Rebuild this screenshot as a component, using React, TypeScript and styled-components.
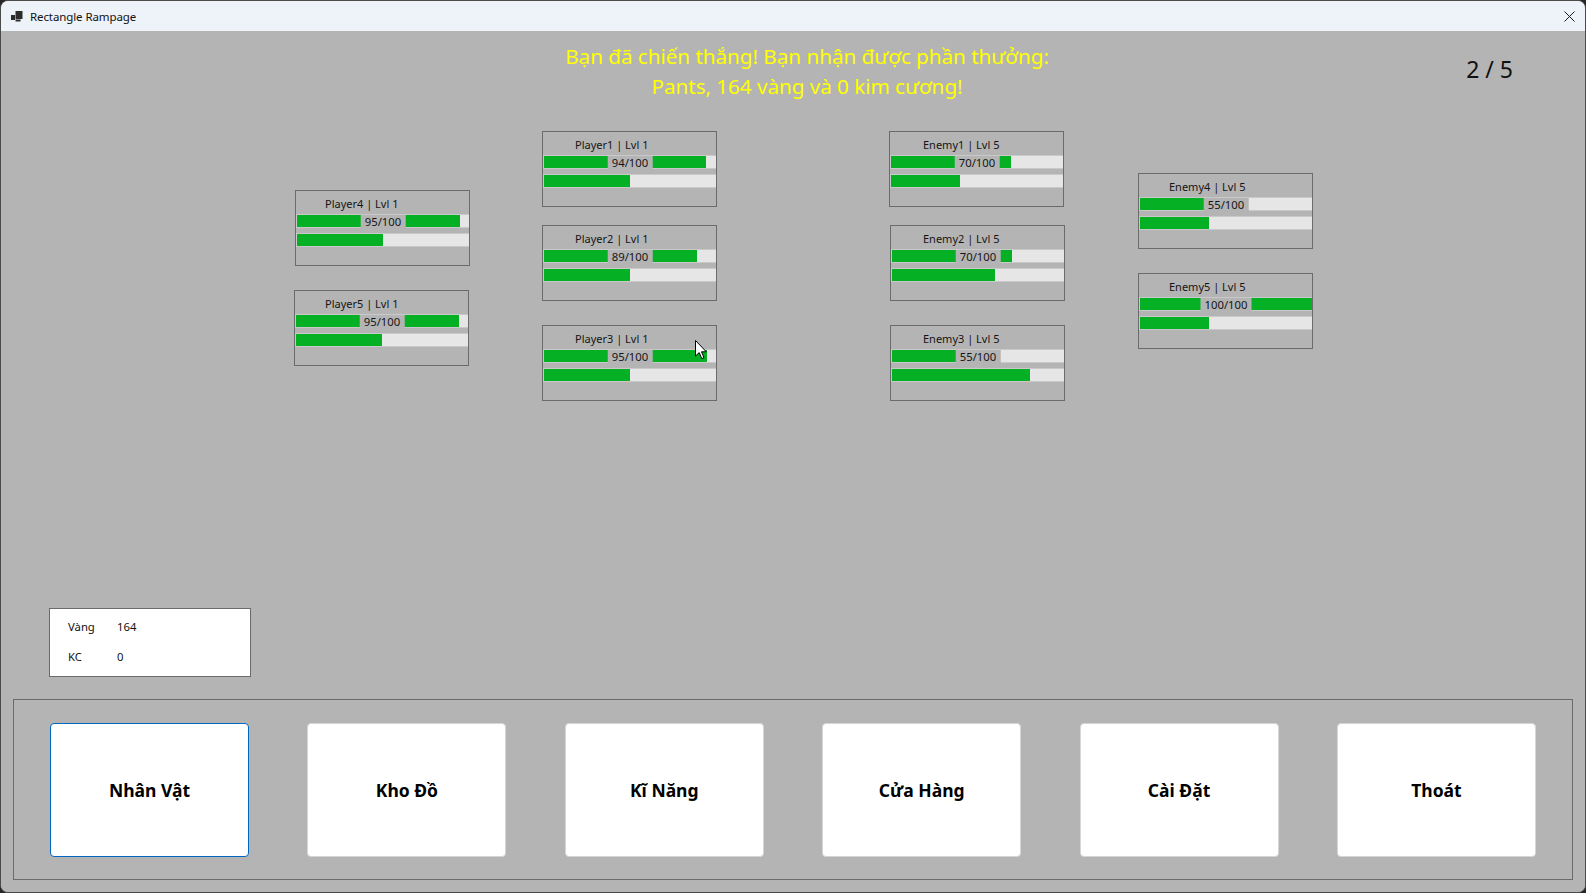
import React from "react";
import styled, { createGlobalStyle } from "styled-components";

const Global = createGlobalStyle`
  html, body { margin: 0; padding: 0; background: #262626; }
  body { width: 1586px; height: 893px; overflow: hidden; }
  * { box-sizing: border-box; }
`;

const UI = `"Noto Sans", "Open Sans", sans-serif`;

const Window = styled.div`
  width: 1586px;
  height: 893px;
  border: 1px solid #4b4b4b;
  border-radius: 8px;
  overflow: hidden;
  display: flex;
  flex-direction: column;
  font-family: ${UI};
  background: #b4b4b4;
`;

const TitleBar = styled.div`
  height: 30px;
  flex: none;
  background: #eef3f9;
  display: flex;
  align-items: center;
  padding-left: 10px;
  color: #111;
`;

const TitleText = styled.span`
  font-size: 11.5px;
  margin-left: 7px;
  letter-spacing: -0.1px;
`;

const CloseBtn = styled.div`
  margin-left: auto;
  width: 46px;
  height: 30px;
  display: flex;
  align-items: center;
  justify-content: center;
  margin-right: -7px;
`;

const Client = styled.div`
  flex: 1;
  position: relative;
  display: flex;
  flex-direction: column;
  background: #b4b4b4;
`;

const Header = styled.div`
  display: flex;
  align-items: flex-start;
  padding-top: 10px;
  padding-right: 72px;
`;

const Message = styled.div`
  width: 640px;
  margin-left: 486px;
  text-align: center;
  color: #ffff00;
  font-size: 20.8px;
  line-height: 30px;
  letter-spacing: -0.1px;
`;

const Counter = styled.div`
  margin-left: auto;
  padding-top: 12px;
  font-size: 23px;
  line-height: 32px;
  color: #111;
`;

const Battlefield = styled.div`
  display: flex;
  align-items: flex-start;
  margin-top: 30px;
`;

const Column = styled.div<{ $left: number; $top: number }>`
  display: flex;
  flex-direction: column;
  margin-left: ${(p) => p.$left}px;
  margin-top: ${(p) => p.$top}px;
`;

const Panel = styled.div<{ $gap: number; $dx: number }>`
  width: 175px;
  height: 76px;
  border: 1px solid #6b6b6b;
  overflow: hidden;
  margin-top: ${(p) => p.$gap}px;
  margin-left: ${(p) => p.$dx}px;
  background: #b4b4b4;
`;

const UnitName = styled.div<{ $indent: number }>`
  height: 23px;
  padding-top: 3px;
  padding-left: ${(p) => p.$indent}px;
  font-size: 11px;
  line-height: 20px;
  color: #141414;
  white-space: nowrap;
`;

const Bar = styled.div<{ $mt: number }>`
  position: relative;
  box-sizing: content-box;
  width: 172px;
  height: 12px;
  border: 1px solid #c9c9c9;
  background: #e6e6e6;
  margin-top: ${(p) => p.$mt}px;
`;

const Fill = styled.div`
  height: 100%;
  background: #06b025;
`;

const BarLabel = styled.div`
  position: absolute;
  top: 0;
  left: 50%;
  transform: translateX(-50%);
  height: 13px;
  padding: 0 4px;
  background: #b4b4b4;
  font-size: 11.3px;
  line-height: 14px;
  color: #141414;
  white-space: nowrap;
`;

const InfoBox = styled.div`
  margin-top: auto;
  margin-left: 48px;
  width: 202px;
  height: 69px;
  border: 1px solid #6b6b6b;
  background: #ffffff;
  display: grid;
  grid-template-columns: 49px auto;
  grid-auto-rows: 30px;
  align-items: center;
  padding: 2px 0 0 18px;
  font-size: 11.3px;
  color: #111;
`;

const GroupBox = styled.div`
  margin: 22px 12px 12px 12px;
  height: 181px;
  border: 1px solid #6b6b6b;
  display: flex;
  justify-content: space-between;
  align-items: flex-start;
  padding: 23px 36px 0 36px;
`;

const MenuButton = styled.button<{ $focused?: boolean }>`
  width: 199px;
  height: 134px;
  background: #ffffff;
  border: 1px solid ${(p) => (p.$focused ? "#0067c0" : "#d6d6d6")};
  border-radius: 4px;
  font-family: ${UI};
  font-weight: 700;
  font-size: 17.5px;
  color: #000;
  padding: 0;
  cursor: default;
`;

const Pointer = styled.svg`
  position: absolute;
  left: 694px;
  top: 309px;
`;

type Unit = { name: string; hp: number; mp: number; indent: number; gap: number; dx?: number };

const columns: { left: number; top: number; units: Unit[] }[] = [
  {
    left: 294,
    top: 59,
    units: [
      { name: "Player4 | Lvl 1", hp: 95, mp: 50, indent: 29, gap: 0 },
      { name: "Player5 | Lvl 1", hp: 95, mp: 50, indent: 30, gap: 24, dx: -1 },
    ],
  },
  {
    left: 72,
    top: 0,
    units: [
      { name: "Player1 | Lvl 1", hp: 94, mp: 50, indent: 32, gap: 0 },
      { name: "Player2 | Lvl 1", hp: 89, mp: 50, indent: 32, gap: 18 },
      { name: "Player3 | Lvl 1", hp: 95, mp: 50, indent: 32, gap: 24 },
    ],
  },
  {
    left: 172,
    top: 0,
    units: [
      { name: "Enemy1 | Lvl 5", hp: 70, mp: 40, indent: 33, gap: 0 },
      { name: "Enemy2 | Lvl 5", hp: 70, mp: 60, indent: 32, gap: 18, dx: 1 },
      { name: "Enemy3 | Lvl 5", hp: 55, mp: 80, indent: 32, gap: 24, dx: 1 },
    ],
  },
  {
    left: 73,
    top: 42,
    units: [
      { name: "Enemy4 | Lvl 5", hp: 55, mp: 40, indent: 30, gap: 0 },
      { name: "Enemy5 | Lvl 5", hp: 100, mp: 40, indent: 30, gap: 24 },
    ],
  },
];

const buttons = ["Nhân Vật", "Kho Đồ", "Kĩ Năng", "Cửa Hàng", "Cài Đặt", "Thoát"];

function UnitPanel({ u }: { u: Unit }) {
  return (
    <Panel $gap={u.gap} $dx={u.dx ?? 0}>
      <UnitName $indent={u.indent}>{u.name}</UnitName>
      <Bar $mt={0}>
        <Fill style={{ width: `${u.hp}%` }} />
        <BarLabel>{u.hp}/100</BarLabel>
      </Bar>
      <Bar $mt={5}>
        <Fill style={{ width: `${u.mp}%` }} />
      </Bar>
    </Panel>
  );
}

export default function App() {
  return (
    <>
      <Global />
      <Window>
        <TitleBar>
          <svg width="12" height="11" viewBox="0 0 12 11">
            <rect x="0" y="4" width="4" height="5" fill="#2b2b2b" />
            <rect x="4.5" y="0" width="7" height="8" fill="#2b2b2b" />
            <rect x="4.5" y="8.5" width="5" height="2" fill="#2b2b2b" />
          </svg>
          <TitleText>Rectangle Rampage</TitleText>
          <CloseBtn>
            <svg width="11" height="11" viewBox="0 0 11 11">
              <path d="M0.5 0.5 L10.5 10.5 M10.5 0.5 L0.5 10.5" stroke="#1a1a1a" strokeWidth="1" />
            </svg>
          </CloseBtn>
        </TitleBar>
        <Client>
          <Header>
            <Message>
              Bạn đã chiến thắng! Bạn nhận được phần thưởng:
              <br />
              Pants, 164 vàng và 0 kim cương!
            </Message>
            <Counter>2 / 5</Counter>
          </Header>
          <Battlefield>
            {columns.map((c, i) => (
              <Column key={i} $left={c.left} $top={c.top}>
                {c.units.map((u) => (
                  <UnitPanel key={u.name} u={u} />
                ))}
              </Column>
            ))}
          </Battlefield>
          <InfoBox>
            <span>Vàng</span>
            <span>164</span>
            <span>KC</span>
            <span>0</span>
          </InfoBox>
          <GroupBox>
            {buttons.map((b, i) => (
              <MenuButton key={b} $focused={i === 0}>
                {b}
              </MenuButton>
            ))}
          </GroupBox>
          <Pointer width="13" height="20" viewBox="0 0 13 20">
            <path
              d="M0.5 0.5 L0.5 16 L4.2 12.6 L6.8 18.6 L9 17.6 L6.5 11.8 L11.3 11.8 Z"
              fill="#ffffff"
              stroke="#000000"
              strokeWidth="1"
              strokeLinejoin="miter"
            />
          </Pointer>
        </Client>
      </Window>
    </>
  );
}
